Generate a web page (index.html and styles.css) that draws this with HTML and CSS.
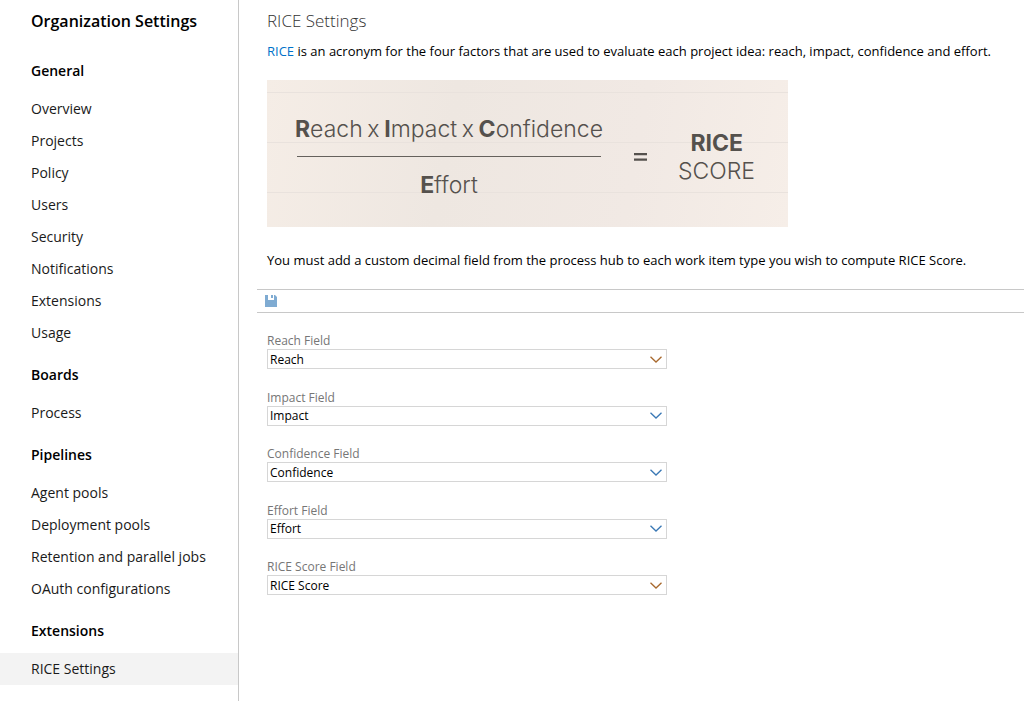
FILE: index.html
```html
<!DOCTYPE html>
<html lang="en">
<head>
<meta charset="utf-8">
<meta name="viewport" content="width=device-width, initial-scale=1">
<title>RICE Settings</title>
<link rel="stylesheet" href="styles.css">
</head>
<body>
<div class="layout">
  <nav class="sidebar" aria-label="Organization Settings">
    <h1 class="sidebar-title">Organization Settings</h1>
    <h2 class="group">General</h2>
    <a class="item" href="#">Overview</a>
    <a class="item" href="#">Projects</a>
    <a class="item" href="#">Policy</a>
    <a class="item" href="#">Users</a>
    <a class="item" href="#">Security</a>
    <a class="item" href="#">Notifications</a>
    <a class="item" href="#">Extensions</a>
    <a class="item" href="#">Usage</a>
    <h2 class="group">Boards</h2>
    <a class="item" href="#">Process</a>
    <h2 class="group">Pipelines</h2>
    <a class="item" href="#">Agent pools</a>
    <a class="item" href="#">Deployment pools</a>
    <a class="item" href="#">Retention and parallel jobs</a>
    <a class="item" href="#">OAuth configurations</a>
    <h2 class="group">Extensions</h2>
    <a class="item selected" href="#" aria-current="page">RICE Settings</a>
  </nav>
  <main class="content">
    <h2 class="page-title">RICE Settings</h2>
    <p class="text"><a class="link" href="#">RICE</a> is an acronym for the four factors that are used to evaluate each project idea: reach, impact, confidence and effort.</p>
    <div class="formula">
      <div class="fraction">
        <div class="numerator"><span><b>R</b>each</span> <span>x</span> <span><b>I</b>mpact</span> <span>x</span> <span><b>C</b>onfidence</span></div>
        <div class="denominator"><b>E</b>ffort</div>
      </div>
      <div class="equals"><svg width="13" height="8" viewBox="0 0 13 8" role="img" aria-label="equals"><path d="M0 1.2h13M0 6.6h13" stroke="#55514d" stroke-width="2.2"/></svg></div>
      <div class="score"><b>RICE</b><span>SCORE</span></div>
    </div>
    <p class="text">You must add a custom decimal field from the process hub to each work item type you wish to compute RICE Score.</p>
    <div class="toolbar">
      <button class="save" type="button" aria-label="Save"><svg width="12" height="12" viewBox="0 0 12 12"><path d="M0 0h3v5h6V0h1l2 2v10H0z" fill="#7fabd2"/><path d="M6 0h2v3H6z" fill="#7fabd2"/></svg></button>
    </div>
    <form class="fields">
      <div class="field">
        <label for="reach">Reach Field</label>
        <div class="combo"><select id="reach"><option>Reach</option></select><svg class="chevron warm" viewBox="0 0 12 7"><path d="M.5.7 6 6 11.500.7"/></svg></div>
      </div>
      <div class="field">
        <label for="impact">Impact Field</label>
        <div class="combo"><select id="impact"><option>Impact</option></select><svg class="chevron" viewBox="0 0 12 7"><path d="M.5.7 6 6 11.500.7"/></svg></div>
      </div>
      <div class="field">
        <label for="confidence">Confidence Field</label>
        <div class="combo"><select id="confidence"><option>Confidence</option></select><svg class="chevron" viewBox="0 0 12 7"><path d="M.5.7 6 6 11.500.7"/></svg></div>
      </div>
      <div class="field">
        <label for="effort">Effort Field</label>
        <div class="combo"><select id="effort"><option>Effort</option></select><svg class="chevron" viewBox="0 0 12 7"><path d="M.5.7 6 6 11.500.7"/></svg></div>
      </div>
      <div class="field">
        <label for="score">RICE Score Field</label>
        <div class="combo"><select id="score"><option>RICE Score</option></select><svg class="chevron warm" viewBox="0 0 12 7"><path d="M.5.7 6 6 11.500.7"/></svg></div>
      </div>
    </form>
  </main>
</div>
</body>
</html>
```

FILE: styles.css
```css
* { box-sizing: border-box; }
body {
  margin: 0;
  background: #fff;
  color: #000;
  font-family: "Open Sans", "Noto Sans", sans-serif;
}
.layout { display: flex; min-height: 100vh; }
.sidebar {
  flex: none;
  width: 239px;
  border-right: 1px solid #c8c8c8;
}
.sidebar-title {
  margin: 0;
  padding: 5px 0 8px 31px;
  font-size: 16px;
  font-weight: 600;
  line-height: 32px;
}
.group {
  margin: 0;
  padding: 10px 0 6px 31px;
  font-size: 14px;
  font-weight: 600;
  line-height: 32px;
}
.item {
  display: block;
  padding-left: 31px;
  color: #1a1a1a;
  font-size: 14px;
  line-height: 32px;
  text-decoration: none;
}
.selected { background: #f3f3f3; }
.content { flex: 1; min-width: 0; padding: 8px 0 24px 18px; }
.page-title {
  margin: 0;
  padding-left: 10px;
  color: #333;
  font-size: 17px;
  font-weight: 300;
  line-height: 26px;
}
.text {
  margin: 0;
  padding: 7px 10px 0;
  font-size: 13px;
  line-height: 20px;
}
.link { color: #0072c9; text-decoration: none; }
.formula {
  display: flex;
  align-items: center;
  width: fit-content;
  min-width: 521px;
  margin: 19px 10px 16px;
  padding: 32px 33px 25px 28px;
  color: #55514d;
  font-family: Inter, sans-serif;
  font-size: 23px;
  font-weight: 300;
  line-height: 34px;
  background:
    repeating-linear-gradient(transparent 0 12px, #e9e2dd 12px 13px, transparent 13px 50px),
    linear-gradient(100deg, #f5ede6 0, #eee7e1 35%, #f1e9e4 70%, #f6eee8 100%);
}
.formula b { font-weight: 700; }
.fraction { width: 308px; }
.numerator {
  display: flex;
  justify-content: space-between;
  padding-bottom: 10px;
  white-space: nowrap;
}
.denominator {
  margin: 0 2px;
  padding-top: 11px;
  border-top: 1px solid #65615c;
  text-align: center;
}
.equals { display: flex; margin-left: 31px; }
.score {
  display: grid;
  flex: 1;
  justify-items: end;
  line-height: 28px;
}
.score b { padding-right: 12px; }
.toolbar {
  display: flex;
  align-items: center;
  height: 24px;
  margin-top: 19px;
  padding-left: 8px;
  border: solid #c8c8c8;
  border-width: 1px 0;
}
.save {
  display: flex;
  padding: 0;
  border: 0;
  background: none;
}
.fields {
  display: flex;
  flex-direction: column;
  justify-content: space-between;
  min-height: 262px;
  margin: 20px 10px 0;
}
.field { max-width: 400px; }
.field label {
  display: block;
  color: #767676;
  font-size: 12px;
  line-height: 16px;
}
.combo { display: grid; align-items: center; }
.combo > * { grid-area: 1 / 1; }
.combo select {
  appearance: none;
  width: 100%;
  height: 20px;
  padding: 0 24px 0 2px;
  border: 1px solid #d6d6d6;
  border-radius: 0;
  background: #fff;
  color: #000;
  font: inherit;
  font-size: 12px;
}
.chevron {
  justify-self: end;
  width: 12px;
  height: 7px;
  margin-right: 5px;
  fill: none;
  stroke: #3a78b5;
  stroke-width: 1.3;
  pointer-events: none;
}
.warm { stroke: #a8692e; }
```
